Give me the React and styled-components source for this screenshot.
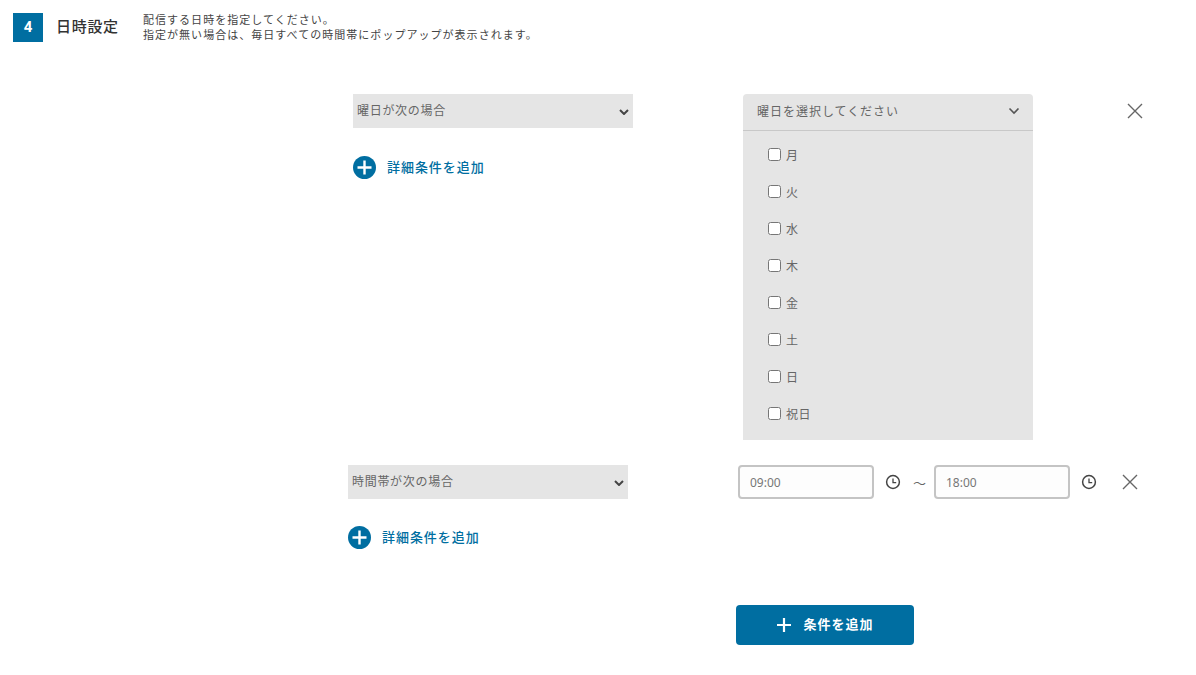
import React from "react";
import styled, { createGlobalStyle } from "styled-components";

const arrow = encodeURIComponent('<svg xmlns="http://www.w3.org/2000/svg" width="10" height="6" viewBox="0 0 10 6"><path d="M1 1l4 4 4-4" fill="none" stroke="#444" stroke-width="2"/></svg>');

const Global = createGlobalStyle`
  html, body { margin: 0; padding: 0; background: #fff; }
  body { font-family: "Noto Sans CJK JP", "Noto Sans", sans-serif; color: #555; }
`;
const Page = styled.div`
  width: 1196px;
  height: 675px;
  padding-top: 13px;
  box-sizing: border-box;
  overflow: hidden;
`;
const Header = styled.header`
  display: flex;
  align-items: flex-start;
  padding-left: 13px;
  height: 30px;
`;
const Badge = styled.div`
  width: 30px;
  height: 29px;
  background: #006ea1;
  color: #fff;
  font: 700 15px/29px "Roboto", "Noto Sans", sans-serif;
  text-align: center;
`;
const Title = styled.h2`
  margin: 0 0 0 13px;
  width: 87px;
  font-size: 15px;
  line-height: 25px;
  font-weight: 500;
  letter-spacing: 0.7px;
  color: #333;
`;
const Desc = styled.p`
  margin: -1px 0 0;
  font-size: 11px;
  line-height: 15px;
  letter-spacing: 1.03px;
  color: #444;
  white-space: pre-line;
`;
const Row = styled.section`
  display: flex;
  align-items: flex-start;
  margin-top: ${p => p.$top}px;
  padding-left: ${p => p.$left}px;
`;
const LeftCol = styled.div`
  width: 280px;
  margin-right: 110px;
`;
const Select = styled.select`
  display: block;
  box-sizing: border-box;
  appearance: none;
  width: 280px;
  height: 34px;
  padding: 0 20px 3px 4px;
  border: none;
  border-radius: 0;
  background: #e5e5e5 url("data:image/svg+xml,${arrow}") no-repeat 266px 15px;
  color: #666;
  font-family: inherit;
  font-size: 12px;
  letter-spacing: 0.7px;
  outline: none;
`;
const AddDetail = styled.button`
  display: flex;
  align-items: center;
  gap: 11px;
  margin-top: ${p => p.$top}px;
  padding: 0;
  border: none;
  background: none;
  color: #006ea1;
  font-family: inherit;
  font-size: 13px;
  font-weight: 500;
  letter-spacing: 0.95px;
  line-height: 20px;
`;
const RaisedText = styled.span`
  display: block;
  padding-bottom: ${p => p.$by}px;
`;
const Dropdown = styled.div`
  width: 290px;
  height: 346px;
  border-radius: 4px 4px 0 0;
  background: #e5e5e5;
`;
const DropHead = styled.div`
  display: flex;
  align-items: center;
  justify-content: space-between;
  box-sizing: border-box;
  height: 37px;
  padding: 0 13px 2px 14px;
  border-bottom: 1px solid #c8c8c8;
  font-size: 12px;
  letter-spacing: 0.98px;
  color: #666;
`;
const DayList = styled.div`
  display: flex;
  flex-direction: column;
  gap: 15px;
  padding: 14px 0 0 25px;
`;
const Day = styled.label`
  display: flex;
  align-items: center;
  height: 22px;
  font-size: 12px;
  letter-spacing: 0.5px;
  color: #666;
`;
const Check = styled.input`
  width: 13px;
  height: 13px;
  margin: -3px 5px 0 0;
`;
const CloseBtn = styled.button`
  display: flex;
  padding: 0;
  border: none;
  background: none;
  margin-left: ${p => p.$gap}px;
  margin-top: ${p => p.$top}px;
`;
const TimeGroup = styled.div`
  display: flex;
  align-items: center;
`;
const TimeInput = styled.input`
  box-sizing: border-box;
  width: 136px;
  height: 34px;
  padding: 0 10px;
  border: 2px solid #c4c4c4;
  border-radius: 4px;
  background: #fdfdfd;
  color: #777;
  font-family: "Noto Sans", sans-serif;
  font-size: 12px;
  outline: none;
`;
const ClockIcon = styled.svg`
  margin-left: 11px;
  width: 16px;
  height: 16px;
`;
const Tilde = styled.span`
  width: 12px;
  margin: 0 9px 0 12px;
  font-size: 13px;
  line-height: 1;
  color: #666;
`;
const Footer = styled.div`
  margin-top: 56px;
  padding-left: 736px;
`;
const PrimaryBtn = styled.button`
  display: flex;
  align-items: center;
  justify-content: center;
  gap: 11px;
  width: 178px;
  height: 40px;
  padding: 0;
  border: none;
  border-radius: 4px;
  background: #006ea1;
  color: #fff;
  font-family: inherit;
  font-size: 13px;
  font-weight: 700;
  letter-spacing: 1px;
`;

const PlusCircle = () => (
  <svg width="23" height="23" viewBox="0 0 23 23">
    <circle cx="11.5" cy="11.5" r="11.5" fill="#006ea1" />
    <path d="M11.5 4.5v14M4.5 11.5h14" stroke="#fff" strokeWidth="2.4" />
  </svg>
);
const Chevron = () => (
  <svg width="12" height="8" viewBox="0 0 12 8">
    <path d="M1.5 1.5 6 6l4.5-4.5" fill="none" stroke="#555" strokeWidth="1.6" />
  </svg>
);
const Cross = () => (
  <svg width="16" height="16" viewBox="0 0 16 16">
    <path d="M1 1l14 14M15 1 1 15" stroke="#666" strokeWidth="1.4" />
  </svg>
);
const Clock = () => (
  <ClockIcon viewBox="0 0 16 16">
    <circle cx="8" cy="8" r="6.4" fill="none" stroke="#444" strokeWidth="1.5" />
    <path d="M8 4.4V8.6h3.2" fill="none" stroke="#444" strokeWidth="1.3" />
  </ClockIcon>
);

const days = ["月", "火", "水", "木", "金", "土", "日", "祝日"];

export default function App() {
  return (
    <Page>
      <Global />
      <Header>
        <Badge>4</Badge>
        <Title>日時設定</Title>
        <Desc>{"配信する日時を指定してください。\n指定が無い場合は、毎日すべての時間帯にポップアップが表示されます。"}</Desc>
      </Header>
      <Row $top={51} $left={353}>
        <LeftCol>
          <Select defaultValue="a">
            <option value="a">曜日が次の場合</option>
          </Select>
          <AddDetail $top={28}><PlusCircle /><RaisedText $by={2}>詳細条件を追加</RaisedText></AddDetail>
        </LeftCol>
        <Dropdown>
          <DropHead><RaisedText $by={2}>曜日を選択してください</RaisedText><Chevron /></DropHead>
          <DayList>
            {days.map(d => (
              <Day key={d}><Check type="checkbox" /><RaisedText $by={3}>{d}</RaisedText></Day>
            ))}
          </DayList>
        </Dropdown>
        <CloseBtn $gap={94} $top={9}><Cross /></CloseBtn>
      </Row>
      <Row $top={25} $left={348}>
        <LeftCol>
          <Select defaultValue="a">
            <option value="a">時間帯が次の場合</option>
          </Select>
          <AddDetail $top={27}><PlusCircle /><RaisedText $by={2}>詳細条件を追加</RaisedText></AddDetail>
        </LeftCol>
        <TimeGroup>
          <TimeInput defaultValue="09:00" />
          <Clock />
          <Tilde>〜</Tilde>
          <TimeInput defaultValue="18:00" />
          <Clock />
          <CloseBtn $gap={25} $top={0}><Cross /></CloseBtn>
        </TimeGroup>
      </Row>
      <Footer>
        <PrimaryBtn>
          <svg width="16" height="16" viewBox="0 0 16 16"><path d="M8 1v14M1 8h14" stroke="#fff" strokeWidth="2.2" /></svg>
          <RaisedText $by={3}>条件を追加</RaisedText>
        </PrimaryBtn>
      </Footer>
    </Page>
  );
}
